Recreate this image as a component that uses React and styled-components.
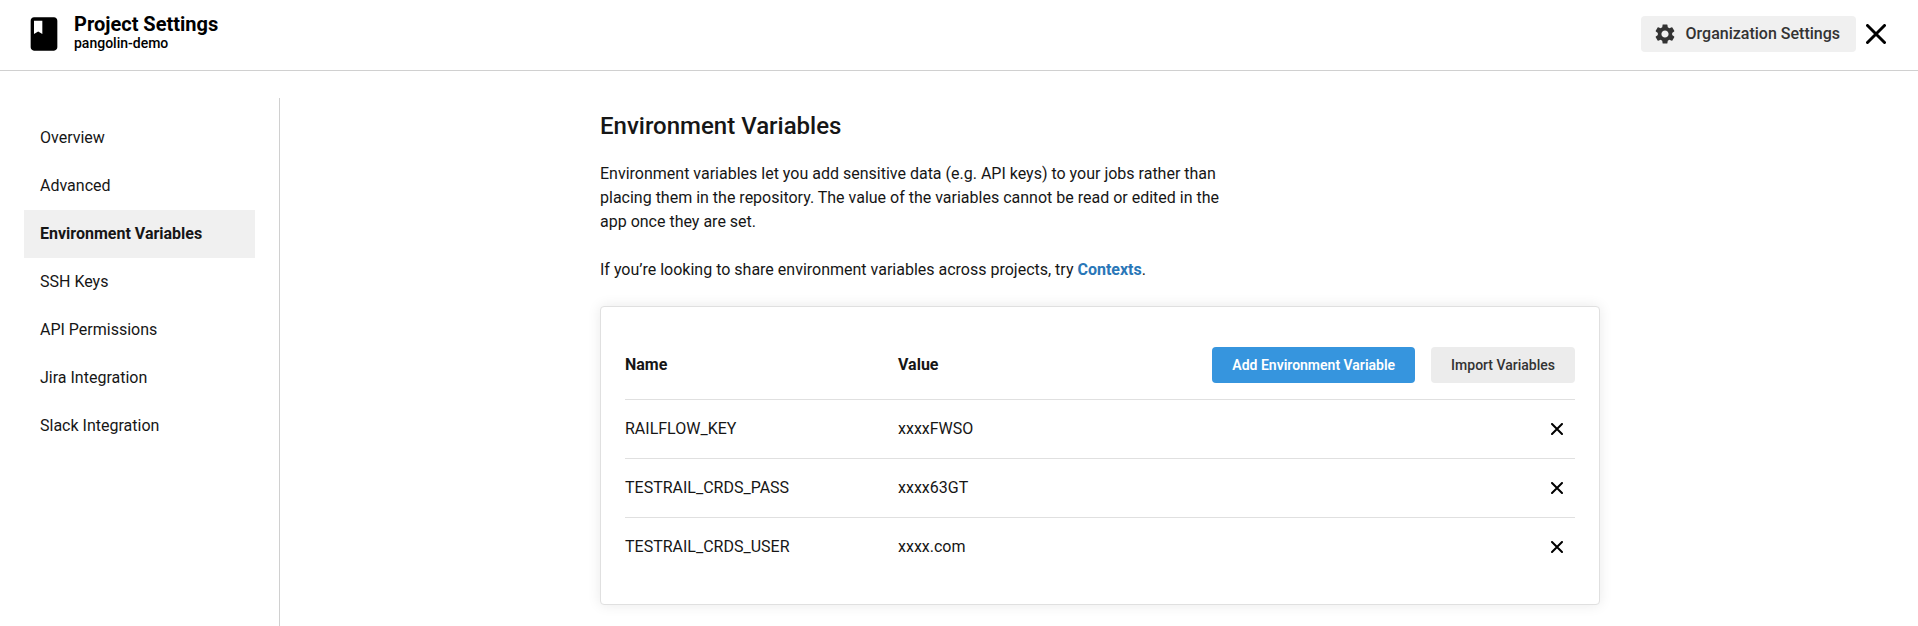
import React from "react";
import styled, { createGlobalStyle, css } from "styled-components";
import { MdClass, MdSettings } from "react-icons/md";

const GlobalStyle = createGlobalStyle`
  *, *::before, *::after { box-sizing: border-box; }
  html, body, #root { height: 100%; }
  body {
    margin: 0;
    background: #fff;
    color: #161616;
    font-family: Roboto, "Liberation Sans", sans-serif;
    font-size: 16px;
    line-height: 24px;
  }
  h1, h2, p, ul { margin: 0; padding: 0; }
  button { font-family: inherit; cursor: pointer; }
`;

const Page = styled.div`
  display: flex;
  flex-direction: column;
  min-height: 100%;
`;

const Header = styled.header`
  display: flex;
  align-items: center;
  justify-content: space-between;
  padding: 14px 24px 16px;
  border-bottom: 1px solid #d0d0d0;
`;

const Brand = styled.div`
  display: flex;
  align-items: flex-start;
  gap: 10px;
  color: #000;
`;

const BrandTitle = styled.h1`
  font-size: 20px;
  line-height: 20px;
  font-weight: 700;
`;

const BrandProject = styled.p`
  font-size: 14px;
  line-height: 18px;
  font-weight: 500;
`;

const HeaderActions = styled.div`
  display: flex;
  align-items: center;
  gap: 2px;
`;

const Button = styled.button`
  display: inline-flex;
  align-items: center;
  height: 36px;
  padding: 0 20px;
  border: 0;
  border-radius: 4px;
  font-size: 14px;
  line-height: 20px;
  font-weight: 500;
  white-space: nowrap;
  color: #333;
  background: #ececec;
  ${({ $primary }) => $primary && css`
    color: #fff;
    font-weight: 600;
    background: #3695de;
  `}
`;

const OrgButton = styled(Button)`
  gap: 9px;
  padding: 0 16px 0 12px;
  font-size: 16px;
  background: #f0f0f0;
`;

const IconButton = styled.button`
  display: inline-flex;
  align-items: center;
  justify-content: center;
  width: 36px;
  height: 36px;
  padding: 0;
  border: 0;
  color: #000;
  background: transparent;
`;

const Body = styled.div`
  display: flex;
  flex: 1;
  padding-top: 27px;
`;

const Sidebar = styled.nav`
  flex: 0 0 280px;
  padding: 16px 24px;
  border-right: 1px solid #d0d0d0;
`;

const NavList = styled.ul`
  list-style: none;
`;

const NavLink = styled.a`
  display: block;
  padding: 12px 16px;
  color: inherit;
  text-decoration: none;
  font-weight: ${({ $active }) => ($active ? 700 : 400)};
  background: ${({ $active }) => ($active ? "#f0f0f0" : "transparent")};
`;

const Main = styled.main`
  flex: 1;
  min-width: 0;
  padding: 12px 22px 16px 24px;
`;

const Content = styled.div`
  max-width: 1000px;
  margin: 0 auto;
`;

const Heading = styled.h2`
  font-size: 24px;
  line-height: 32px;
  font-weight: 500;
`;

const Intro = styled.div`
  display: flex;
  flex-direction: column;
  gap: 24px;
  max-width: 640px;
  margin: 20px 0 24px;
`;

const TextLink = styled.a`
  color: #2977b8;
  font-weight: 700;
  text-decoration: none;
`;

const Card = styled.section`
  padding: 24px 24px 28px;
  border: 1px solid #e0e0e0;
  border-radius: 4px;
  background: #fff;
  box-shadow: 0 0 14px rgba(0, 0, 0, 0.09);
`;

const Table = styled.table`
  width: 100%;
  table-layout: fixed;
  border-collapse: separate;
  border-spacing: 0;
  text-align: left;
`;

const Column = styled.col`
  width: ${({ $width }) => $width};
`;

const HeadCell = styled.th`
  padding: 16px 0;
  border-bottom: 1px solid #e0e0e0;
  font-weight: 700;
`;

const Cell = styled.td`
  padding: 17px 0;
  border-bottom: 1px solid #e0e0e0;
  tr:last-child > & { border-bottom: 0; }
`;

const ActionCell = styled(Cell)`
  padding: 11px 0;
  text-align: right;
`;

const RemoveButton = styled(IconButton)`
  vertical-align: top;
`;

const TableActions = styled.div`
  display: flex;
  justify-content: flex-end;
  gap: 16px;
`;

function CloseIcon({ size, stroke }) {
  const near = stroke / 2;
  const far = size - near;
  return (
    <svg width={size} height={size} viewBox={`0 0 ${size} ${size}`} fill="none" stroke="currentColor" strokeWidth={stroke} strokeLinecap="round" aria-hidden="true">
      <path d={`M${near} ${near}L${far} ${far}M${far} ${near}L${near} ${far}`} />
    </svg>
  );
}

const navItems = [
  "Overview",
  "Advanced",
  "Environment Variables",
  "SSH Keys",
  "API Permissions",
  "Jira Integration",
  "Slack Integration",
];

const variables = [
  { name: "RAILFLOW_KEY", value: "xxxxFWSO" },
  { name: "TESTRAIL_CRDS_PASS", value: "xxxx63GT" },
  { name: "TESTRAIL_CRDS_USER", value: "xxxx.com" },
];

export default function App() {
  return (
    <Page>
      <GlobalStyle />
      <Header>
        <Brand>
          <MdClass size={40} aria-hidden="true" />
          <div>
            <BrandTitle>Project Settings</BrandTitle>
            <BrandProject>pangolin-demo</BrandProject>
          </div>
        </Brand>
        <HeaderActions>
          <OrgButton type="button">
            <MdSettings size={24} aria-hidden="true" />
            Organization Settings
          </OrgButton>
          <IconButton type="button" aria-label="Close settings">
            <CloseIcon size={20} stroke={3} />
          </IconButton>
        </HeaderActions>
      </Header>
      <Body>
        <Sidebar aria-label="Project settings">
          <NavList>
            {navItems.map((item) => {
              const active = item === "Environment Variables";
              return (
                <li key={item}>
                  <NavLink href="#" $active={active} aria-current={active ? "page" : undefined}>
                    {item}
                  </NavLink>
                </li>
              );
            })}
          </NavList>
        </Sidebar>
        <Main>
          <Content>
            <Heading>Environment Variables</Heading>
            <Intro>
              <p>
                Environment variables let you add sensitive data (e.g. API keys) to your jobs rather than
                placing them in the repository. The value of the variables cannot be read or edited in the
                app once they are set.
              </p>
              <p>
                If you’re looking to share environment variables across projects, try{" "}
                <TextLink href="#">Contexts</TextLink>.
              </p>
            </Intro>
            <Card>
              <Table>
                <colgroup>
                  <Column $width="273px" />
                  <Column $width="273px" />
                  <Column $width="auto" />
                </colgroup>
                <thead>
                  <tr>
                    <HeadCell scope="col">Name</HeadCell>
                    <HeadCell scope="col">Value</HeadCell>
                    <HeadCell as="td">
                      <TableActions>
                        <Button type="button" $primary>Add Environment Variable</Button>
                        <Button type="button">Import Variables</Button>
                      </TableActions>
                    </HeadCell>
                  </tr>
                </thead>
                <tbody>
                  {variables.map(({ name, value }) => (
                    <tr key={name}>
                      <Cell>{name}</Cell>
                      <Cell>{value}</Cell>
                      <ActionCell>
                        <RemoveButton type="button" aria-label={`Remove ${name}`}>
                          <CloseIcon size={12} stroke={2} />
                        </RemoveButton>
                      </ActionCell>
                    </tr>
                  ))}
                </tbody>
              </Table>
            </Card>
          </Content>
        </Main>
      </Body>
    </Page>
  );
}
